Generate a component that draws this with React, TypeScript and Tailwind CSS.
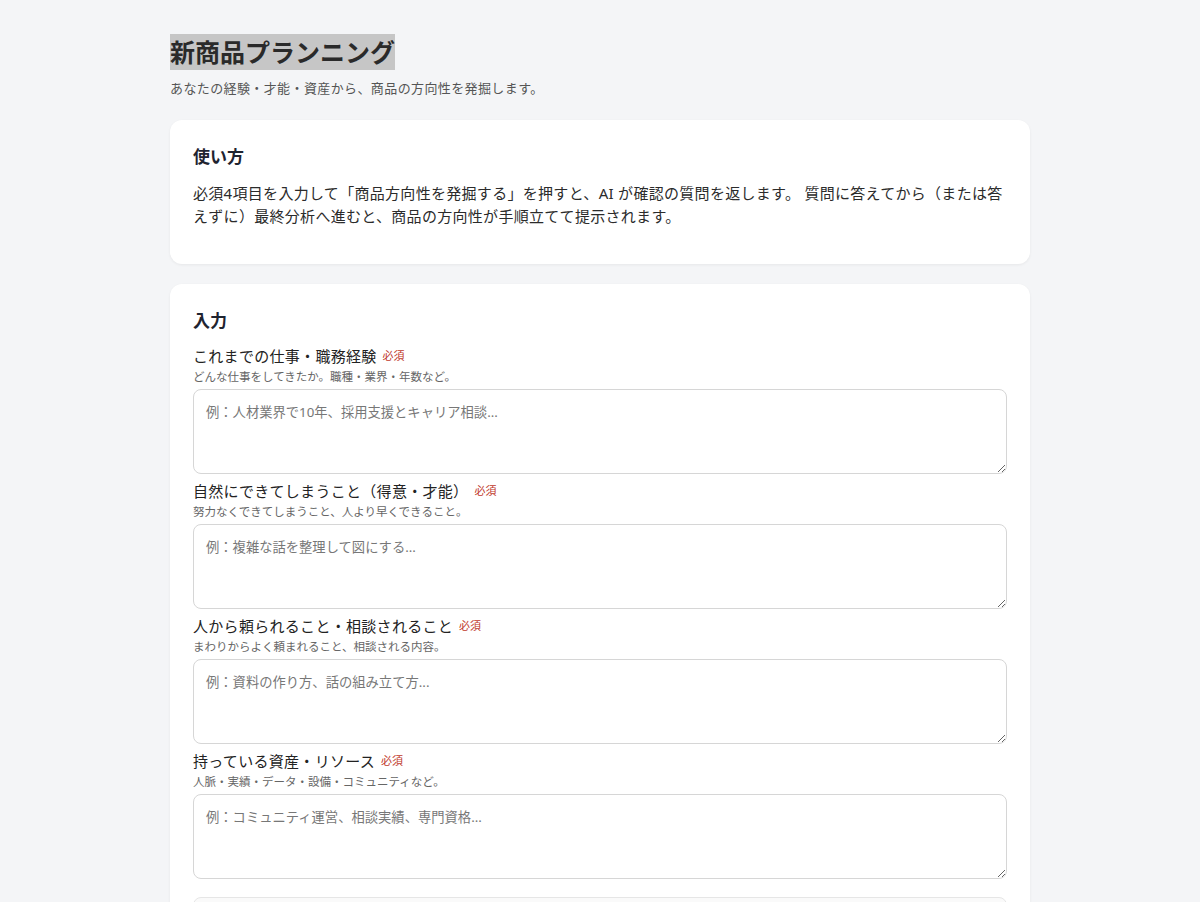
const fields = [
  {
    label: "これまでの仕事・職務経験",
    hint: "どんな仕事をしてきたか。職種・業界・年数など。",
    placeholder: "例：人材業界で10年、採用支援とキャリア相談...",
  },
  {
    label: "自然にできてしまうこと（得意・才能）",
    hint: "努力なくできてしまうこと、人より早くできること。",
    placeholder: "例：複雑な話を整理して図にする...",
  },
  {
    label: "人から頼られること・相談されること",
    hint: "まわりからよく頼まれること、相談される内容。",
    placeholder: "例：資料の作り方、話の組み立て方...",
  },
  {
    label: "持っている資産・リソース",
    hint: "人脈・実績・データ・設備・コミュニティなど。",
    placeholder: "例：コミュニティ運営、相談実績、専門資格...",
  },
];

export default function App() {
  return (
    <div
      className="min-h-screen bg-[#f4f5f7] text-[#222]"
      style={{ fontFamily: '"Noto Sans", "Noto Sans CJK JP", sans-serif' }}
    >
      <div className="w-[860px] mx-auto pt-[34px] pb-10">
        <h1 className="text-[25px] font-bold leading-[36px] text-[#2a2a2a]">
          <span className="bg-[#c6c6c6] py-[1px]">新商品プランニング</span>
        </h1>
        <p className="mt-[8px] text-[13px] leading-[20px] tracking-[0.03em] text-[#555]">
          あなたの経験・才能・資産から、商品の方向性を発掘します。
        </p>

        <section className="mt-[22px] bg-white rounded-xl shadow-[0_1px_3px_rgba(0,0,0,0.06)] px-[23px] pt-[24px] pb-[36px]">
          <h2 className="text-[17px] font-bold leading-[26px] text-[#1f2430]">使い方</h2>
          <p className="mt-[12px] text-[15px] leading-[23px] tracking-[0.02em] text-[#2b2b2b]">
            必須4項目を入力して「商品方向性を発掘する」を押すと、AI が確認の質問を返します。 質問に答えてから（または答えずに）最終分析へ進むと、商品の方向性が手順立てて提示されます。
          </p>
        </section>

        <section className="mt-[20px] bg-white rounded-xl shadow-[0_1px_3px_rgba(0,0,0,0.06)] px-[23px] pt-[24px] pb-[24px]">
          <h2 className="text-[17px] font-bold leading-[26px] text-[#1f2430]">入力</h2>
          <div className="mt-[11px] flex flex-col gap-[6px]">
            {fields.map((f) => (
              <div key={f.label} className="flex flex-col">
                <label className="flex items-center text-[15px] leading-[22px] tracking-[0.02em] text-[#222]">
                  {f.label}
                  <span className="ml-[6px] text-[11px] tracking-normal text-[#c0392b]">必須</span>
                </label>
                <p className="mt-[2px] text-[11.5px] leading-[16px] text-[#666]">{f.hint}</p>
                <textarea
                  className="mt-[4px] h-[85px] w-full rounded-lg border border-[#d6d6d6] bg-white p-3 text-[13.3px] leading-[20px] placeholder:text-[#777] outline-none"
                  placeholder={f.placeholder}
                />
              </div>
            ))}
          </div>
          <div className="mt-[18px] h-[56px] rounded-lg border border-[#e6e6e6] bg-[#fafafa]" />
        </section>
      </div>
    </div>
  );
}
